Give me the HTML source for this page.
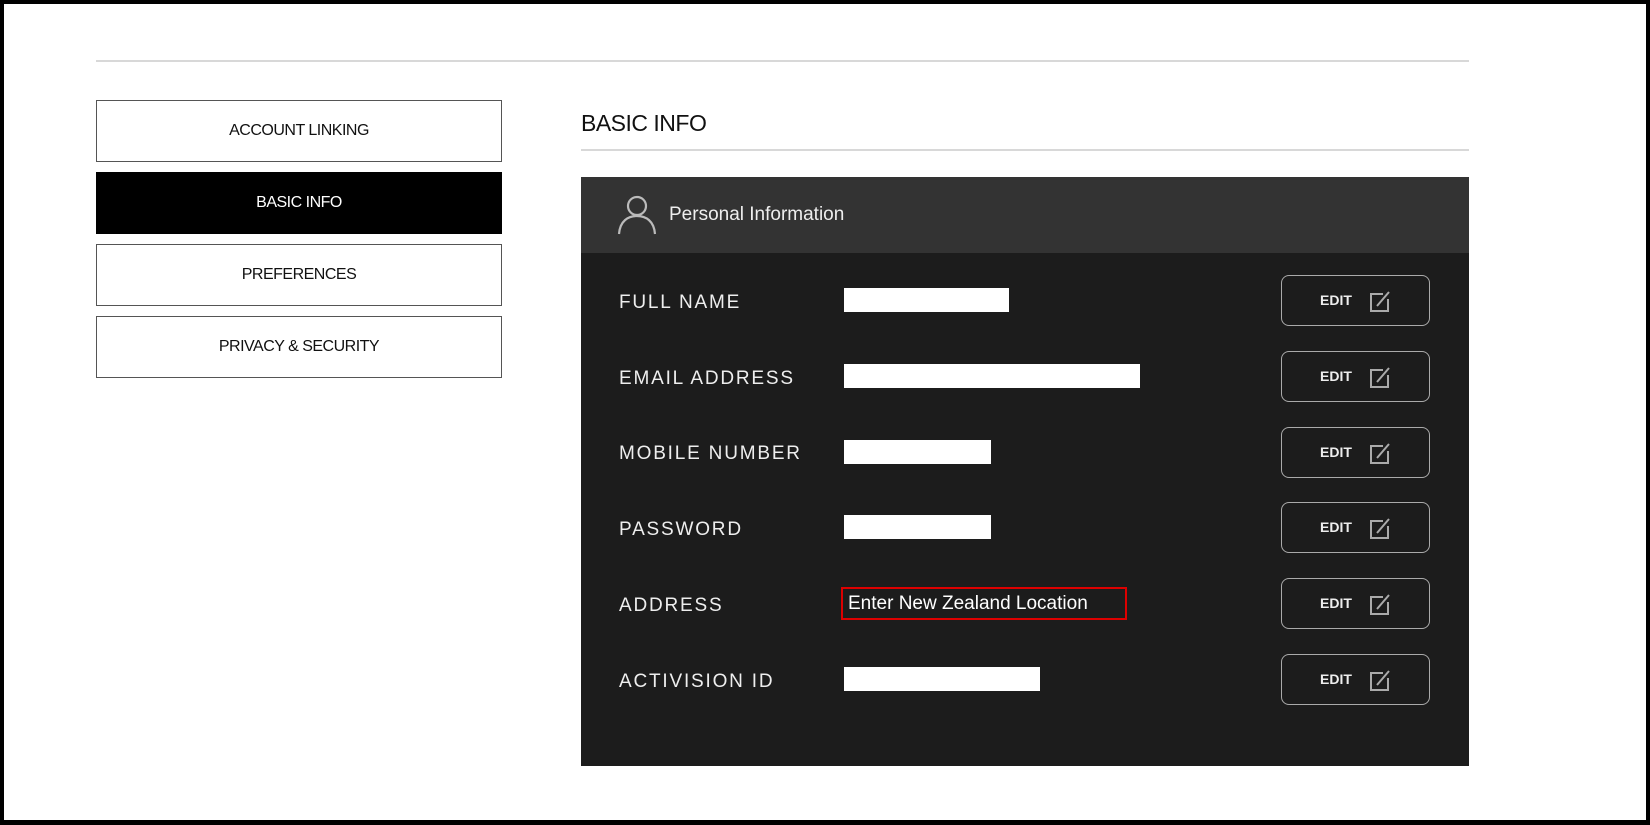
<!DOCTYPE html>
<html><head><meta charset="utf-8"><style>
*{margin:0;padding:0;box-sizing:border-box}
body{width:1650px;height:825px;background:#fff;position:relative;overflow:hidden;font-family:"Liberation Sans",sans-serif}
.frame{position:absolute;left:0;top:0;width:1650px;height:825px;border:4px solid #000;border-bottom-width:5px}
.hl{position:absolute;height:2px;background:#d8d8d8}
.nav{position:absolute;left:96px;width:406px;height:62px;border:1px solid #555;display:flex;align-items:center;justify-content:center;font-size:16px;color:#111;letter-spacing:-0.5px}
.nav.on{background:#000;color:#fff;border-color:#000}
.h{position:absolute;left:581px;top:110px;font-size:23px;color:#111;letter-spacing:-0.5px}
.panel{position:absolute;left:581px;top:177px;width:888px;height:589px;background:#1c1c1c}
.ph{height:76px;background:#333;position:relative}
.ph span{position:absolute;left:88px;top:27px;color:#eee;font-size:19px}
.lab{position:absolute;left:38px;color:#eee;font-size:19px;letter-spacing:1.8px}
.wb{position:absolute;left:263px;height:24px;background:#fff}
.btn{position:absolute;left:700px;width:149px;height:51px;border:1.5px solid #aaa;border-radius:8px;color:#eee;font-size:14px}
.btn b{position:absolute;left:38px;top:16px;font-weight:bold}
.btn svg{position:absolute;left:86px;top:14px}
</style></head><body>
<div class="frame"></div>
<div class="hl" style="left:96px;top:60px;width:1373px"></div>
<div class="nav" style="top:100px">ACCOUNT LINKING</div>
<div class="nav on" style="top:172px">BASIC INFO</div>
<div class="nav" style="top:244px">PREFERENCES</div>
<div class="nav" style="top:316px">PRIVACY &amp; SECURITY</div>
<div class="h">BASIC INFO</div>
<div class="hl" style="left:581px;top:149px;width:888px"></div>
<div class="panel">
<div class="ph">
<svg style="position:absolute;left:36px;top:17px" width="42" height="42" viewBox="0 0 42 42" fill="none" stroke="#bbb" stroke-width="2.2"><circle cx="20" cy="12" r="9"/><path d="M2 40 C3 27 11 22 20 22 C29 22 37 27 38 40"/></svg>
<span>Personal Information</span></div>
<div class="lab" style="top:115px">FULL NAME</div><div class="wb" style="top:111px;width:165px"></div>
<div class="lab" style="top:191px">EMAIL ADDRESS</div><div class="wb" style="top:187px;width:296px"></div>
<div class="lab" style="top:266px">MOBILE NUMBER</div><div class="wb" style="top:263px;width:147px"></div>
<div class="lab" style="top:342px">PASSWORD</div><div class="wb" style="top:338px;width:147px"></div>
<div class="lab" style="top:418px">ADDRESS</div>
<div style="position:absolute;left:260px;top:410px;width:286px;height:33px;border:2px solid #d00;color:#fff;font-size:19px;padding:4px 0 0 5px">Enter New Zealand Location</div>
<div class="lab" style="top:494px">ACTIVISION ID</div><div class="wb" style="top:490px;width:196px"></div>
<div class="btn" style="top:98px"><b>EDIT</b><svg width="24" height="24" viewBox="0 0 24 24" fill="none" stroke="#aaa" stroke-width="2"><path d="M15 4H3v17h17V9"/><path d="M9 16L21 2"/></svg></div>
<div class="btn" style="top:174px"><b>EDIT</b><svg width="24" height="24" viewBox="0 0 24 24" fill="none" stroke="#aaa" stroke-width="2"><path d="M15 4H3v17h17V9"/><path d="M9 16L21 2"/></svg></div>
<div class="btn" style="top:250px"><b>EDIT</b><svg width="24" height="24" viewBox="0 0 24 24" fill="none" stroke="#aaa" stroke-width="2"><path d="M15 4H3v17h17V9"/><path d="M9 16L21 2"/></svg></div>
<div class="btn" style="top:325px"><b>EDIT</b><svg width="24" height="24" viewBox="0 0 24 24" fill="none" stroke="#aaa" stroke-width="2"><path d="M15 4H3v17h17V9"/><path d="M9 16L21 2"/></svg></div>
<div class="btn" style="top:401px"><b>EDIT</b><svg width="24" height="24" viewBox="0 0 24 24" fill="none" stroke="#aaa" stroke-width="2"><path d="M15 4H3v17h17V9"/><path d="M9 16L21 2"/></svg></div>
<div class="btn" style="top:477px"><b>EDIT</b><svg width="24" height="24" viewBox="0 0 24 24" fill="none" stroke="#aaa" stroke-width="2"><path d="M15 4H3v17h17V9"/><path d="M9 16L21 2"/></svg></div>
</div>
</body></html>
